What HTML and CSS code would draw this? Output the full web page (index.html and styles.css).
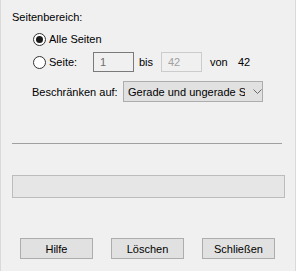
FILE: index.html
```html
<!DOCTYPE html>
<html lang="de">
<head>
  <meta charset="UTF-8">
  <title>Drucken</title>
  <link rel="stylesheet" href="styles.css">
</head>
<body>
  <div class="dialog">
    <div class="title">Seitenbereich:</div>

    <div class="row radio-row first">
      <span class="radio checked"></span>
      <span class="radio-label">Alle Seiten</span>
    </div>

    <div class="row radio-row second">
      <span class="radio"></span>
      <span class="radio-label fixed">Seite:</span>
      <span class="field">1</span>
      <span class="bis">bis</span>
      <span class="field disabled">42</span>
      <span class="von">von</span>
      <span class="total">42</span>
    </div>

    <div class="row limit-row">
      <span class="limit-label">Beschränken auf:</span>
      <div class="select">
        <span class="select-text">Gerade und ungerade Seiten</span>
        <svg class="chevron" width="9" height="5" viewBox="0 0 9 5">
          <polyline points="0.5,0.5 4.5,4.5 8.5,0.5" fill="none" stroke="#6a6a6a" stroke-width="1"/>
        </svg>
      </div>
    </div>

    <div class="separator"></div>

    <div class="progress"></div>

    <div class="buttons">
      <button class="btn">Hilfe</button>
      <button class="btn">Löschen</button>
      <button class="btn">Schließen</button>
    </div>
  </div>
</body>
</html>
```

FILE: styles.css
```css
body { margin: 0; font-family: "Liberation Sans", Arial, sans-serif; font-size: 11px; color: #000; }
.dialog { width: 296px; height: 271px; box-sizing: border-box; background: #f0f0f0; border-left: 1px solid #dadada; border-right: 1px solid #dadada; padding: 10px 11px 0 11px; }
.title { height: 15px; line-height: 15px; }
.row { display: flex; align-items: center; }
.radio-row { padding-left: 21px; }
.radio-row.first { height: 20px; margin-top: 4px; }
.radio-row.second { height: 20px; margin-top: 3px; }
.radio { width: 11px; height: 11px; border: 1px solid #333; border-radius: 50%; background: #fff; display: flex; align-items: center; justify-content: center; flex: none; }
.radio.checked::after { content: ""; width: 7px; height: 7px; border-radius: 50%; background: #1a1a1a; }
.radio-label { margin-left: 3px; }
.radio-label.fixed { width: 44px; }
.field { width: 39px; height: 18px; line-height: 18px; border: 1px solid #7a7a7a; background: #f0f0f0; color: #6d6d6d; padding-left: 6px; box-sizing: border-box; width: 41px; height: 20px; }
.field.disabled { border-color: #cccccc; color: #a0a0a0; }
.bis { width: 27px; padding-left: 5px; box-sizing: border-box; }
.von { margin-left: 8px; width: 28px; }
.limit-row { height: 21px; margin-top: 9px; padding-left: 20px; }
.limit-label { width: 91px; flex: none; }
.select { width: 140px; height: 21px; box-sizing: border-box; border: 1px solid #adadad; background: #e1e1e1; display: flex; align-items: center; padding-left: 4px; flex: none; }
.select-text { width: 117px; overflow: hidden; white-space: nowrap; }
.chevron { margin-left: 8px; }
.separator { width: 270px; height: 1px; background: #a0a0a0; margin-top: 41px; }
.progress { width: 273px; height: 23px; box-sizing: border-box; border: 1px solid #bcbcbc; background: #e6e6e6; margin-top: 31px; }
.buttons { display: flex; gap: 18px; padding-left: 8px; margin-top: 40px; }
.btn { width: 73px; height: 21px; border: 1px solid #adadad; background: #e1e1e1; font-family: inherit; font-size: 11px; color: #000; padding: 0; }
```
